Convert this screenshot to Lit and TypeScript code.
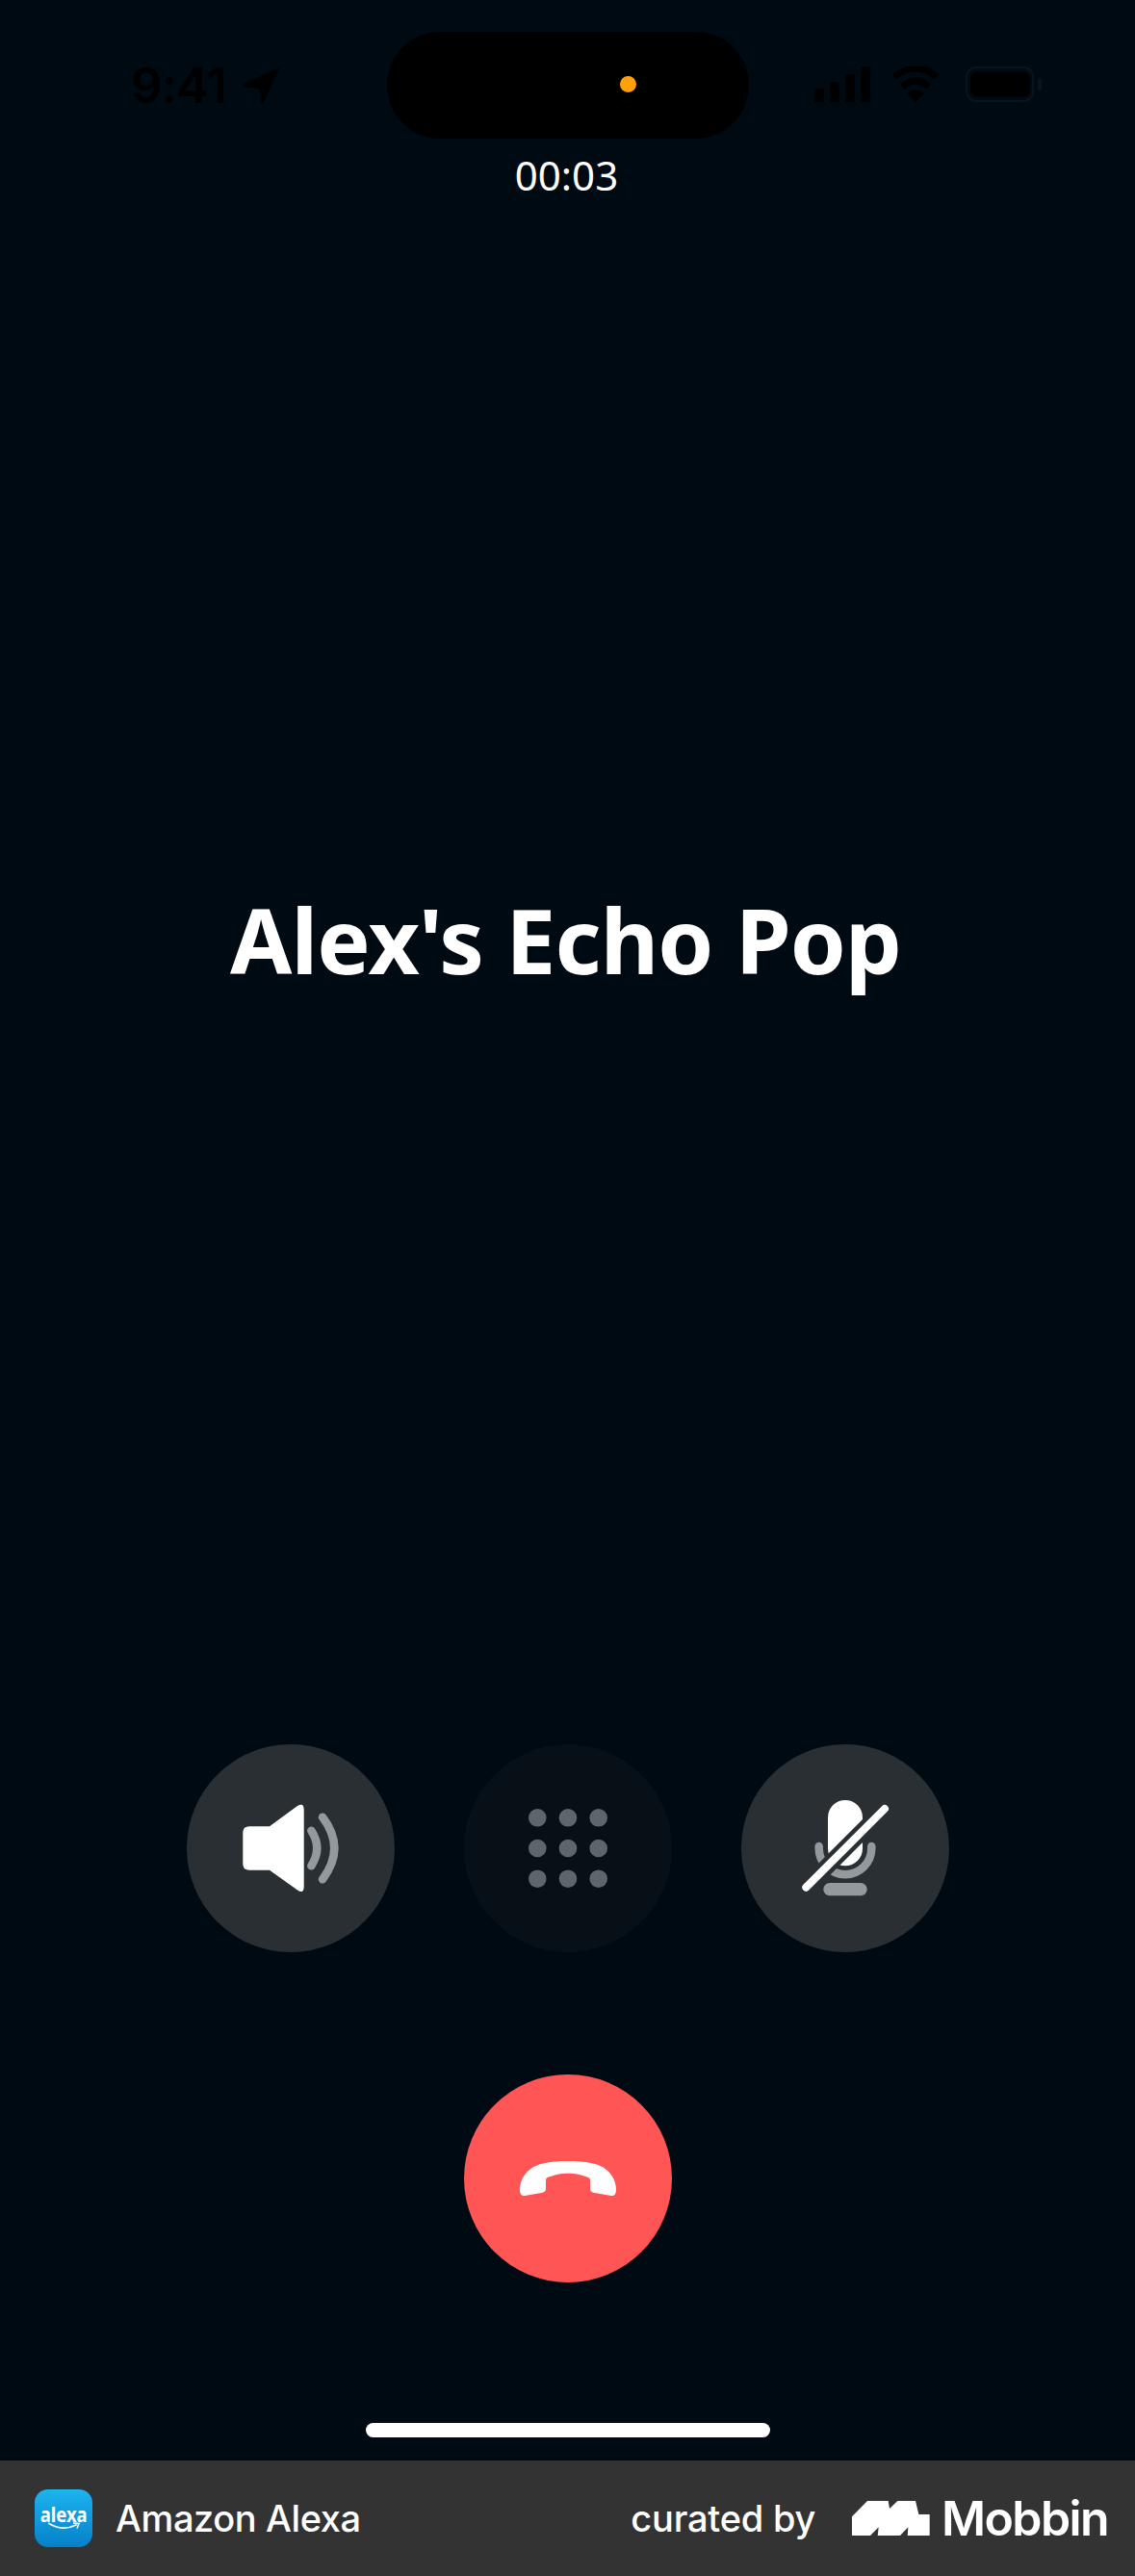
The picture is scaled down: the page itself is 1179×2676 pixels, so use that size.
import { LitElement, css, html, svg } from 'lit'
import { customElement } from 'lit/decorators.js'

const KEYPAD_STOPS = [76.3, 108, 139.7];

@customElement("app-root")
export class AppRoot extends LitElement {
  render() {
    return html`
      <div class="screen">
        <div class="status">
          <div class="clock">
            <span>9:41</span>
            <svg width="39" height="38" viewBox="0 0 39 38">
              <path fill="#000" d="M38 0.5 L1 18 Q-1 19.5 2 20.5 L18 22 L20 36.5 Q21 38.5 22.5 36.5 L39 2 Q39.5 0 38 0.5Z" />
            </svg>
          </div>
          <div class="island"><span class="dot"></span></div>
          <div class="indicators">
            <svg width="58" height="38" viewBox="0 0 58 38">
              <rect x="0" y="23" width="10" height="14" rx="2" />
              <rect x="16" y="16" width="10" height="21" rx="2" />
              <rect x="32" y="8" width="10" height="29" rx="2" />
              <rect x="48" y="0" width="10" height="37" rx="2" />
            </svg>
            <svg width="50" height="38" viewBox="0 0 50 38">
              <path d="M3 11 Q25 -7 47 11" fill="none" stroke="#000" stroke-width="7" />
              <path d="M11.5 21 Q25 9 38.5 21" fill="none" stroke="#000" stroke-width="7" />
              <path d="M16 28 Q25 21 34 28 L25 37Z" />
            </svg>
            <svg width="84" height="38" viewBox="0 0 84 38">
              <rect x="1" y="1" width="69" height="35" rx="10" fill="none" stroke="#0a141b" stroke-width="2" />
              <rect x="5" y="5.5" width="62" height="26" rx="7" />
              <rect x="75" y="12" width="4" height="13" rx="2" fill="#0a141b" />
            </svg>
          </div>
        </div>

        <div class="timer">00:03</div>
        <div class="title">Alex's Echo Pop</div>

        <div class="controls">
          <button class="round">
            <svg width="216" height="216" viewBox="0 0 216 216">
              <path fill="#fff" d="M65 85.3 H86 L115 64 Q121.7 60 121.7 68 V148 Q121.7 156 115 151.5 L86 130.7 H65 Q58.3 130.7 58.3 124 V92 Q58.3 85.3 65 85.3Z" />
              <path class="wave" d="M129.3 89.7 Q141.3 108 129.3 126.3" />
              <path class="wave" d="M141 75.7 Q165.6 108 141 140.3" />
            </svg>
          </button>
          <button class="round faint">
            <svg width="216" height="216" viewBox="0 0 216 216" fill="#5f666b">
              ${KEYPAD_STOPS.map((y) =>
                KEYPAD_STOPS.map((x) => svg`<circle cx=${x} cy=${y} r="9.3" />`)
              )}
            </svg>
          </button>
          <button class="round">
            <svg width="216" height="216" viewBox="0 0 216 216">
              <rect x="90" y="58" width="36" height="68.3" rx="18" fill="#fff" />
              <path class="wave" d="M80.7 106 v2 a27.3 27.3 0 0 0 54.6 0 v-2" />
              <rect x="85.3" y="144" width="45.4" height="13.3" rx="6.6" fill="#94999d" />
              <path d="M67.3 148.7 L149 67" stroke="#292f33" stroke-width="17" fill="none" />
              <path d="M67.3 148.7 L149 67" stroke="#fff" stroke-width="8" stroke-linecap="round" fill="none" />
            </svg>
          </button>
          <button class="round end">
            <svg width="216" height="216" viewBox="0 0 216 216">
              <path fill="#fff" d="M108 90 C90 90 76 92 68 99 C61 105 58 112 58 120 C58 124 60 126.5 63 126 L81.5 122.7 C84 122 85 121 85 118 V110 C85 108 86 107 88 106.5 C95 104 100 102.7 108 102.7 C116 102.7 121 104 128 106.5 C130 107 131 108 131 110 V118 C131 121 132 122 134.5 122.7 L153 126 C156 126.5 158 124 158 120 C158 112 155 105 148 99 C140 92 126 90 108 90Z" />
            </svg>
          </button>
        </div>

        <div class="home"></div>
      </div>

      <footer class="footer">
        <div class="brand">
          <div class="app-icon">
            <span class="app-name">alexa</span>
            <svg width="36" height="10" viewBox="0 0 36 10">
              <path d="M2 1.5 Q16 10 30 3" fill="none" stroke="#fff" stroke-width="1.8" stroke-linecap="round" />
              <path d="M27 1 L33 1.5 L31 6.5" fill="none" stroke="#fff" stroke-width="1.6" />
            </svg>
          </div>
          <span class="brand-name">Amazon Alexa</span>
        </div>
        <div class="credit">
          <span class="curated">curated by</span>
          <svg class="mark" width="80.7" height="36.7" viewBox="30 36 242 110">
            <path fill="#fff" d="M30 85 L78 36 H143 L147 60 L172 36 H228 L238 78 H272 V146 H203 L205 118 L178 146 H110 L113 118 L85 146 H30Z" />
          </svg>
          <span class="mobbin">Mobbin</span>
        </div>
      </footer>
    `;
  }

  static styles = css`
    :host {
      display: block;
      width: 1179px;
      height: 2676px;
      overflow: hidden;
      background: #000a12;
      color: #fff;
      font-family: "Noto Sans", sans-serif;
    }

    .screen {
      height: 2556px;
      display: flex;
      flex-direction: column;
    }

    .status {
      display: grid;
      grid-template-columns: 402px 376px 1fr;
      margin-top: 33px;
      height: 111px;
    }
    .clock {
      display: flex;
      align-items: center;
      gap: 16px;
      padding-left: 136px;
      font: 600 51px/1 Inter, sans-serif;
      letter-spacing: -1px;
      color: #000;
    }
    .island {
      background: #000;
      border-radius: 56px;
      position: relative;
    }
    .dot {
      position: absolute;
      left: 242px;
      top: 46px;
      width: 17px;
      height: 17px;
      border-radius: 50%;
      background: #ff9f0a;
    }
    .indicators {
      display: flex;
      align-items: flex-start;
      gap: 22px;
      padding: 36px 0 0 68px;
    }
    .indicators svg:nth-child(3) {
      margin-left: 5px;
    }

    .timer {
      margin-top: 14px;
      height: 48px;
      font-size: 42px;
      line-height: 48px;
      text-align: center;
      padding-right: 2px;
    }

    .title {
      margin-top: 706px;
      height: 128px;
      font-size: 93px;
      font-weight: 700;
      line-height: 128px;
      letter-spacing: -0.85px;
      text-align: center;
      padding-right: 4px;
    }

    .controls {
      display: grid;
      grid-template-columns: repeat(3, 216px);
      gap: 127px 72px;
      margin: 772px 0 0 194px;
    }
    .round {
      display: block;
      width: 216px;
      height: 216px;
      padding: 0;
      border: 0;
      border-radius: 50%;
      background: #292f33;
    }
    .round svg {
      display: block;
    }
    .faint {
      background: #061016;
    }
    .end {
      grid-column: 2;
      background: #ff5555;
    }
    .wave {
      fill: none;
      stroke: #94999d;
      stroke-width: 8.5;
      stroke-linecap: round;
    }

    .home {
      width: 420px;
      height: 15px;
      margin: 146px 0 0 380px;
      border-radius: 8px;
      background: #fff;
    }

    .footer {
      height: 120px;
      display: flex;
      align-items: center;
      justify-content: space-between;
      padding: 0 28px 0 36px;
      background: #333;
      font-family: Inter, sans-serif;
      font-size: 38px;
      font-weight: 500;
    }
    .brand,
    .credit {
      display: flex;
      align-items: center;
    }
    .brand {
      gap: 24px;
    }
    .brand-name {
      letter-spacing: -0.4px;
    }
    .curated {
      letter-spacing: -0.2px;
    }
    .app-icon {
      width: 60px;
      height: 60px;
      border-radius: 14px;
      background: linear-gradient(#1cb5f0, #0680c8);
      display: flex;
      flex-direction: column;
      align-items: center;
      justify-content: center;
    }
    .app-icon svg {
      display: block;
      margin-left: 2px;
    }
    .app-name {
      font: 700 22px/18px "Noto Sans", sans-serif;
      transform: scaleX(0.84);
    }
    .mark {
      margin: 0 12px 0 38px;
    }
    .mobbin {
      font-size: 50px;
      font-weight: 600;
      letter-spacing: -1.6px;
    }
  `;
}

declare global {
  interface HTMLElementTagNameMap {
    "app-root": AppRoot,
  }
}
